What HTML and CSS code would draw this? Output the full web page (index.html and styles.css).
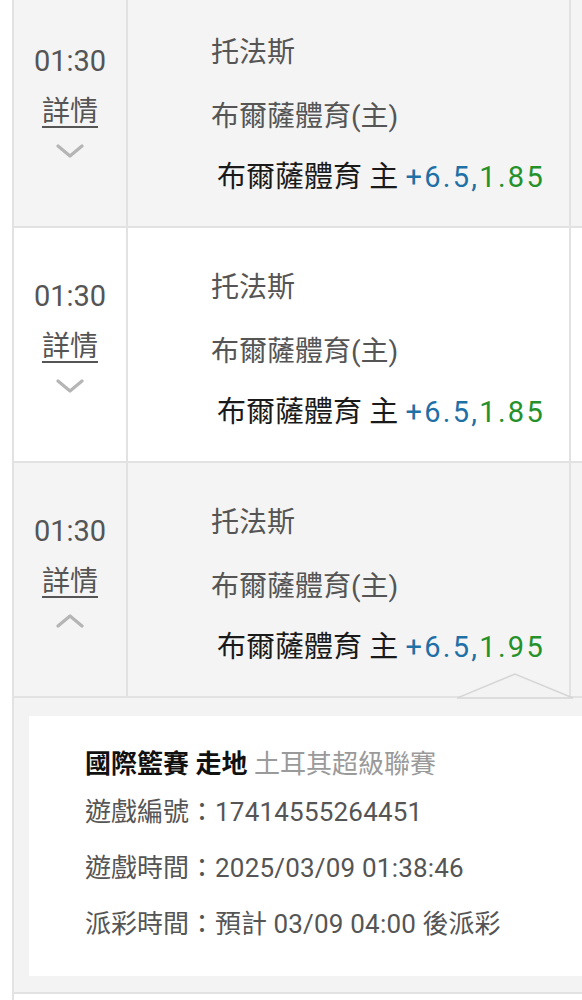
FILE: index.html
```html
<!DOCTYPE html>
<html lang="zh-Hant">
<head>
    <meta charset="UTF-8">
    <meta name="viewport" content="width=device-width, initial-scale=1.0">
    <title>注單明細</title>
    <link rel="stylesheet" href="styles.css">
</head>
<body>
    <div class="bet-list">
        <!-- Row 1 -->
        <div class="bet-row shaded">
            <div class="time-cell">
                <div class="time">01:30</div>
                <a class="detail-link" href="#">詳情</a>
                <svg class="chevron" width="28" height="14" viewBox="0 0 28 14"><polyline points="2,2 14,12 26,2" /></svg>
            </div>
            <div class="match-cell">
                <div class="team">托法斯</div>
                <div class="team home">布爾薩體育(主)</div>
                <div class="pick">布爾薩體育 主 <span class="line">+6.5,</span><span class="odds">1.85</span></div>
            </div>
            <div class="extra-cell"></div>
        </div>

        <!-- Row 2 -->
        <div class="bet-row">
            <div class="time-cell">
                <div class="time">01:30</div>
                <a class="detail-link" href="#">詳情</a>
                <svg class="chevron" width="28" height="14" viewBox="0 0 28 14"><polyline points="2,2 14,12 26,2" /></svg>
            </div>
            <div class="match-cell">
                <div class="team">托法斯</div>
                <div class="team home">布爾薩體育(主)</div>
                <div class="pick">布爾薩體育 主 <span class="line">+6.5,</span><span class="odds">1.85</span></div>
            </div>
            <div class="extra-cell"></div>
        </div>

        <!-- Row 3 (expanded) -->
        <div class="bet-row shaded">
            <div class="time-cell">
                <div class="time">01:30</div>
                <a class="detail-link" href="#">詳情</a>
                <svg class="chevron" width="28" height="14" viewBox="0 0 28 14"><polyline points="2,12 14,2 26,12" /></svg>
            </div>
            <div class="match-cell">
                <div class="team">托法斯</div>
                <div class="team home">布爾薩體育(主)</div>
                <div class="pick">布爾薩體育 主 <span class="line">+6.5,</span><span class="odds">1.95</span></div>
            </div>
            <div class="extra-cell"></div>
        </div>

        <!-- Expanded details -->
        <div class="bet-detail">
            <svg class="notch" width="117" height="26" viewBox="0 0 117 26"><polygon points="0,25 58,1 116,25" /></svg>
            <div class="detail-box">
                <div class="detail-title"><b>國際籃賽 走地</b> <span class="league">土耳其超級聯賽</span></div>
                <div class="detail-line">遊戲編號：<span class="num">17414555264451</span></div>
                <div class="detail-line">遊戲時間：<span class="num">2025/03/09 01:38:46</span></div>
                <div class="detail-line">派彩時間：預計 <span class="num">03/09 04:00</span> 後派彩</div>
            </div>
        </div>

        <div class="bet-row blank"></div>
    </div>
</body>
</html>
```

FILE: styles.css
```css
body {
    margin: 0;
    background: #fff;
    font-family: Roboto, "Noto Sans CJK TC", sans-serif;
    color: #555;
    overflow: hidden;
}

.bet-list {
    margin: -7px 0 0 12px;
    border-left: 2px solid #e2e2e2;
}

.bet-row {
    display: grid;
    grid-template-columns: 114px 443px 1fr;
    height: 233px;
    border-bottom: 2px solid #e2e2e2;
    background: #fff;
}

.bet-row.shaded {
    background: #f4f4f4;
}

.bet-row.blank {
    height: 40px;
    border-bottom: none;
}

.time-cell {
    border-right: 2px solid #e2e2e2;
    display: flex;
    flex-direction: column;
    align-items: center;
    padding-top: 48px;
}

.time {
    font-size: 29px;
    line-height: 40px;
    color: #555;
}

.detail-link {
    margin-top: 11px;
    font-size: 28px;
    line-height: 40px;
    color: #555;
    text-decoration: underline;
    text-underline-offset: 5px;
    text-decoration-thickness: 2px;
}

.chevron {
    margin-top: 12px;
}

.chevron polyline {
    fill: none;
    stroke: #b5b5b5;
    stroke-width: 3.2;
    stroke-linecap: round;
    stroke-linejoin: round;
}

.match-cell {
    border-right: 2px solid #e2e2e2;
    padding: 40px 0 0 83px;
}

.team {
    font-size: 28px;
    line-height: 40px;
    color: #555;
}

.team.home {
    margin-top: 24px;
}

.pick {
    margin-top: 20px;
    padding-left: 6px;
    font-size: 29px;
    line-height: 40px;
    color: #1a1a1a;
    white-space: nowrap;
}

.pick .line {
    color: #1f70a6;
    letter-spacing: 2.3px;
}

.pick .odds {
    color: #24912b;
    letter-spacing: 2.3px;
}

.bet-detail {
    position: relative;
    background: #f3f3f3;
    padding: 18px 0 16px 15px;
    border-bottom: 2px solid #e2e2e2;
}

.notch {
    position: absolute;
    top: -25px;
    left: 443px;
}

.notch polygon {
    fill: #f3f3f3;
    stroke: #d6d6d6;
    stroke-width: 1.5;
}

.detail-box {
    background: #fff;
    padding: 28px 0 24px 56px;
}

.detail-title {
    font-size: 26px;
    line-height: 40px;
}

.detail-title b {
    color: #111;
    font-weight: 700;
}

.detail-title .league {
    color: #9a9a9a;
}

.detail-line {
    font-size: 26px;
    line-height: 56px;
    color: #555;
}

.detail-line .num {
    letter-spacing: 0.2px;
}

.detail-line:first-of-type {
    margin-top: -4px;
}
```
